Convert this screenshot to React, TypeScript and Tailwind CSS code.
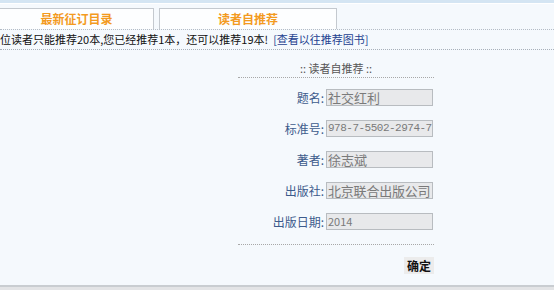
import React from 'react';

const font = { fontFamily: '"Noto Sans CJK SC", "Liberation Sans", sans-serif' };

const fields = [
  { label: '题名:', value: '社交红利', cls: 'text-[13px]' },
  { label: '标准号:', value: '978-7-5502-2974-7', cls: 'text-[11px] font-mono tracking-[-0.5px]' },
  { label: '著者:', value: '徐志斌', cls: 'text-[13px]' },
  { label: '出版社:', value: '北京联合出版公司', cls: 'text-[13px] tracking-[-0.2px]' },
  { label: '出版日期:', value: '2014', cls: 'text-[11px]' },
];

export default function App() {
  return (
    <div className="w-[554px] h-[290px] overflow-hidden bg-[#f5f9fd] flex flex-col text-[12px]" style={font}>
      <div className="h-[3px] bg-[#d4e5f3]" />
      <div className="h-px bg-white" />

      {/* tabs */}
      <div className="mt-[5px] flex items-end gap-[5px] border-b border-dotted border-[#b4bcc6] h-[21px]">
        <div className="w-[154px] h-[21px] border-t border-r border-[#c4c9cf] bg-[#fdfeff] flex items-center justify-center font-bold text-[#f39a1e]">
          最新征订目录
        </div>
        <div className="w-[178px] h-[21px] border-t border-l border-r border-[#c4c9cf] bg-[#fdfeff] flex items-center justify-center font-bold text-[#f39a1e]">
          读者自推荐
        </div>
      </div>

      {/* notice */}
      <div className="h-[20px] flex items-center border-b border-dotted border-[#a8b0ba] text-[#111] text-[11px] whitespace-nowrap">
        <span>位读者只能推荐20本,您已经推荐1本，还可以推荐19本!</span>
        <a className="ml-[5px] text-[#1c3f8f]">[查看以往推荐图书]</a>
      </div>

      {/* form */}
      <div className="ml-[238px] w-[196px] flex flex-col">
        <div className="mt-[11px] h-[15px] flex items-center justify-center text-[#555] text-[11px] border-b border-dotted border-[#a8a8a8] pb-[1px] box-content">
          :: 读者自推荐 ::
        </div>
        <div className="mt-[4px] flex flex-col">
          {fields.map((f) => (
            <div key={f.label} className="h-[31px] flex items-center">
              <div className="w-[88px] pr-[2px] text-right text-[#3d5b8c]">{f.label}</div>
              <div className={`w-[107px] h-[17px] border border-[#b8bcc0] bg-[#e8e9eb] text-[#7a7a7a] pl-px flex items-center overflow-x-hidden whitespace-nowrap ${f.cls}`}>
                {f.value}
              </div>
            </div>
          ))}
        </div>
        <div className="mt-[7px] border-b border-dotted border-[#a8a8a8]" />
        <div className="mt-[12px] flex justify-end">
          <div className="w-[30px] h-[17px] bg-[#ececec] flex items-center justify-center font-bold text-[#111]">确定</div>
        </div>
      </div>

      <div className="flex-1" />
      <div className="h-[2px] bg-[#c9cdd1]" />
      <div className="h-[3px] bg-[#e3e4e6]" />
    </div>
  );
}
